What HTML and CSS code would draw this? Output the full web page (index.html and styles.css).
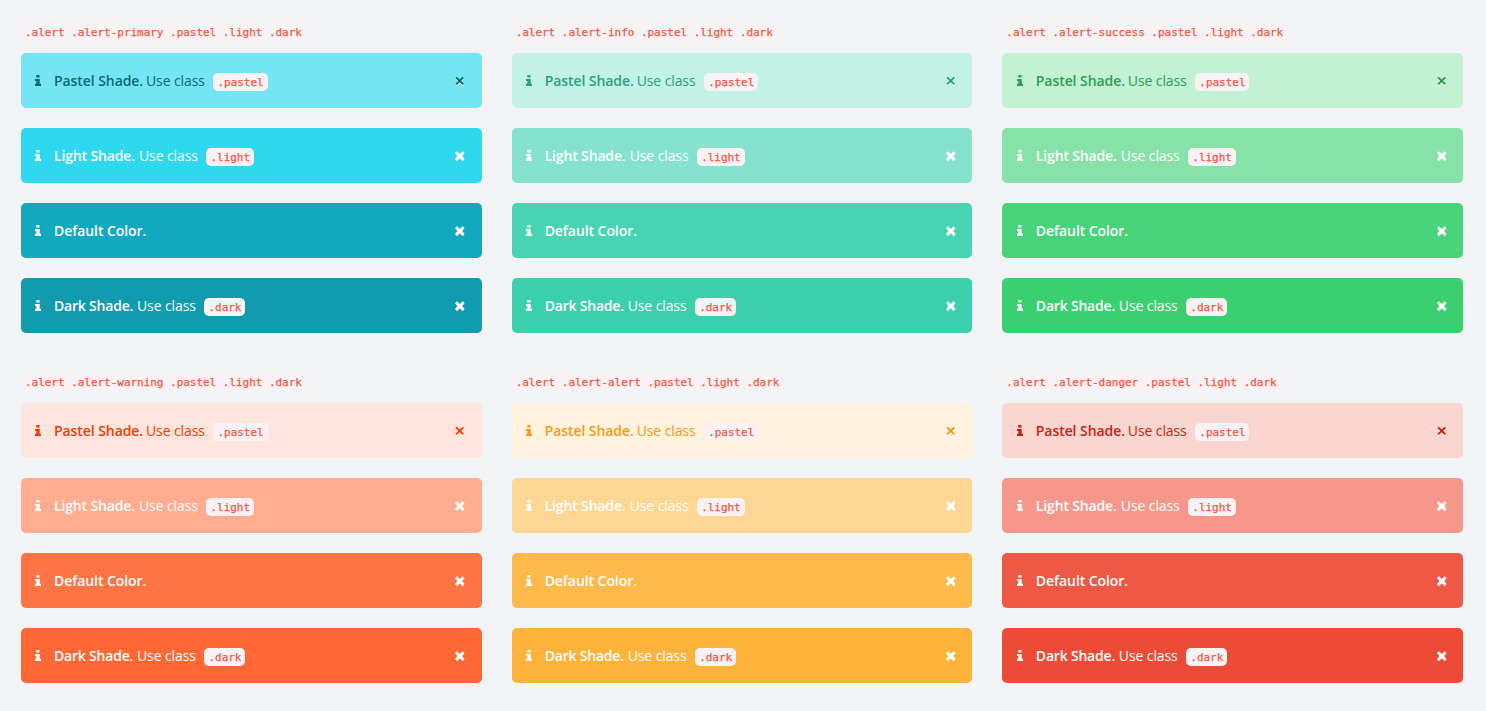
FILE: index.html
```html
<!DOCTYPE html>
<html lang="en">
<head>
<meta charset="utf-8">
<title>Alerts</title>
<link rel="stylesheet" href="styles.css">
</head>
<body>
<main class="grid" id="grid"></main>
<script src="alerts.js"></script>
</body>
</html>
```
FILE: styles.css
```css
* { box-sizing: border-box; }
body {
  margin: 0;
  background: #f1f3f5;
  font-family: "Open Sans", "Noto Sans", sans-serif;
  font-size: 14px;
}
.grid {
  display: grid;
  grid-template-columns: repeat(3, 1fr);
  column-gap: 30px;
  row-gap: 40px;
  padding: 23px 23px 0 21px;
}
.group { display: flex; flex-direction: column; gap: 20px; }
.heading { height: 19px; margin-bottom: -9px; display: flex; }
code {
  font: 11px/18px "DejaVu Sans Mono", monospace;
  letter-spacing: -0.03px;
  color: #ee5744;
  -webkit-text-stroke: 0.25px #ee5744;
  background: #f9f2f4;
  border-radius: 5px;
  padding: 0 4px;
  white-space: pre;
}
.heading code { height: 19px; line-height: 19px; }
.alert {
  height: 55px;
  border-radius: 5px;
  padding: 0 17px 0 14px;
  display: flex;
  align-items: center;
  color: #fff;
}
.info { width: 6px; height: 11px; flex: none; margin-right: 13px; }
.message { display: flex; align-items: center; line-height: 20px; white-space: nowrap; }
.message strong { font-weight: 600; letter-spacing: -0.07px; }
.message span { width: 59px; margin-left: 3px; letter-spacing: -0.1px; }
.message code { margin: 3px 0 0 8px; padding: 0 4px 0 4.5px; height: 18px; line-height: 19px; }
.close { width: 10px; height: 10px; flex: none; margin-left: auto; }
.pastel .close { filter: drop-shadow(0 1px 0 #fff); }
.pastel strong { width: 89px; }
.light strong { width: 82px; letter-spacing: -0.15px; }
.dark strong { width: 80px; letter-spacing: -0.2px; }
.info, .close { display: block; fill: currentColor; overflow: visible; }
.group:nth-child(3n + 2) .alert { padding-right: 16.2px; }
.group:nth-child(3n) .alert { padding-left: 14.5px; padding-right: 16px; }

.alert-primary.pastel { background: #73e5f3; color: #116773; }
.alert-primary.light { background: #2fd7ef; }
.alert-primary.default { background: #12a8bd; }
.alert-primary.dark { background: #109bae; }
.alert-info.pastel { background: #c2f1e5; color: #2b9f82; }
.alert-info.light { background: #85e2cc; }
.alert-info.default { background: #48d3b2; }
.alert-info.dark { background: #3bd0ac; }
.alert-success.pastel { background: #c3f1d3; color: #2a9e52; }
.alert-success.light { background: #86e2a6; }
.alert-success.default { background: #48d37a; }
.alert-success.dark { background: #3bd06f; }
.alert-warning.pastel { background: #ffe5dd; color: #f13b00; }
.alert-warning.light { background: #ffac90; }
.alert-warning.default { background: #ff7444; }
.alert-warning.dark { background: #ff6834; }
.alert-alert.pastel { background: #fff2de; color: #f79a10; }
.alert-alert.light { background: #fed693; }
.alert-alert.default { background: #fdb949; }
.alert-alert.dark { background: #fdb33a; }
.alert-danger.pastel { background: #fbd6d1; color: #cb1d10; }
.alert-danger.light { background: #f5978b; }
.alert-danger.default { background: #ef5845; }
.alert-danger.dark { background: #ee4b36; }
```
FILE: alerts.js
```js
const info = '<svg class="info" viewBox="0 0 6 11"><path d="M1.3 0h3.2v2.6H1.3zM0 4h4.7v4.8H6V11H0V8.8h1.4V6H0z"/></svg>';
const bold = '<path d="M2 .2 4.8 3.1 7.6.2 9.6 2.2 7.1 5.1 9.6 8.1 7.6 10.2 4.8 7.2 2 10.2 0 8.1 2.5 5.1 0 2.2z"/>';
const thin = '<path d="M1.7.8 4.7 3.6 7.7.8 9 2.1 6.1 4.9 9 7.8 7.7 9.1 4.7 6.2 1.7 9.1.4 7.8 3.3 4.9.4 2.1z"/>';
const shades = [['pastel', 'Pastel Shade.'], ['light', 'Light Shade.'], ['default', 'Default Color.'], ['dark', 'Dark Shade.']];

document.getElementById('grid').innerHTML = ['primary', 'info', 'success', 'warning', 'alert', 'danger'].map(type => `
  <section class="group">
    <div class="heading"><code>.alert .alert-${type} .pastel .light .dark</code></div>
    ${shades.map(([shade, title]) => `
    <div class="alert alert-${type} ${shade}">
      ${info}
      <div class="message"><strong>${title}</strong>${shade === 'default' ? '' : `<span>Use class</span><code>.${shade}</code>`}</div>
      <svg class="close" viewBox="0 0 10 10">${shade === 'pastel' ? thin : bold}</svg>
    </div>`).join('')}
  </section>`).join('');
```
